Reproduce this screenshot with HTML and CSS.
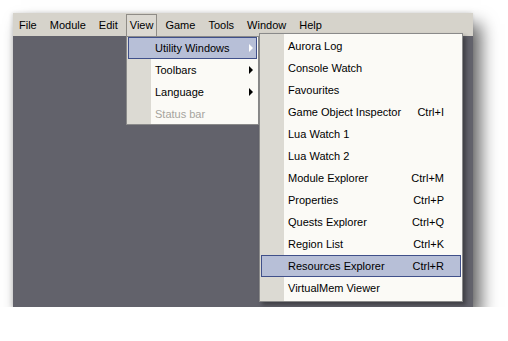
FILE: index.html
```html
<!DOCTYPE html>
<html lang="en">

<head>
    <meta charset="UTF-8">
    <title>View menu</title>
    <link rel="stylesheet" href="styles.css">
</head>

<body>
    <div class="window">
        <div class="menubar">
            <span class="top-item">File</span>
            <span class="top-item">Module</span>
            <span class="top-item">Edit</span>
            <span class="top-item open">View</span>
            <span class="top-item">Game</span>
            <span class="top-item">Tools</span>
            <span class="top-item">Window</span>
            <span class="top-item">Help</span>
        </div>
        <div class="workspace"></div>

        <div class="menu view-menu">
            <div class="item active"><span class="label">Utility Windows</span><span class="arrow"></span></div>
            <div class="item"><span class="label">Toolbars</span><span class="arrow"></span></div>
            <div class="item"><span class="label">Language</span><span class="arrow"></span></div>
            <div class="item disabled"><span class="label">Status bar</span></div>
        </div>

        <div class="menu utility-menu">
            <div class="item"><span class="label">Aurora Log</span></div>
            <div class="item"><span class="label">Console Watch</span></div>
            <div class="item"><span class="label">Favourites</span></div>
            <div class="item"><span class="label">Game Object Inspector</span><span class="key">Ctrl+I</span></div>
            <div class="item"><span class="label">Lua Watch 1</span></div>
            <div class="item"><span class="label">Lua Watch 2</span></div>
            <div class="item"><span class="label">Module Explorer</span><span class="key">Ctrl+M</span></div>
            <div class="item"><span class="label">Properties</span><span class="key">Ctrl+P</span></div>
            <div class="item"><span class="label">Quests Explorer</span><span class="key">Ctrl+Q</span></div>
            <div class="item"><span class="label">Region List</span><span class="key">Ctrl+K</span></div>
            <div class="item active"><span class="label">Resources Explorer</span><span class="key">Ctrl+R</span></div>
            <div class="item"><span class="label">VirtualMem Viewer</span></div>
        </div>
    </div>
</body>

</html>
```

FILE: styles.css
```css
* {
    margin: 0px;
    box-sizing: border-box;
}

body {
    background: #ffffff;
    font-family: "Liberation Sans", Arial, sans-serif;
    font-size: 11px;
    color: #000000;
    padding: 13px 0 0 13px;
}

.window {
    position: relative;
    width: 460px;
    height: 294px;
    display: flex;
    flex-direction: column;
    box-shadow: 8px 11px 16px rgba(0, 0, 0, 0.6), -1px 0 4px rgba(0, 0, 0, 0.15);
}

.menubar {
    height: 23px;
    background: #d6d3cb;
    display: flex;
    align-items: stretch;
}

.top-item {
    display: flex;
    align-items: center;
    padding: 0 5px 1px 6px;
    border: 1px solid transparent;
    border-bottom: none;
    margin-top: 1px;
}

.top-item:first-child {
    padding-left: 5px;
}

.top-item.open {
    border-color: #8f8c86;
    background: #dcd9d2;
    padding: 0 3px 1px 3px;
    margin-left: 2px;
    margin-right: 1px;
}

.workspace {
    flex: 1;
    background: #62626b;
}

.menu {
    position: absolute;
    background: #fbfaf6;
    border: 1px solid #8a8a8a;
    padding: 1px;
    background-image: linear-gradient(to right, #dcdad3 24px, transparent 24px);
    background-repeat: no-repeat;
    background-origin: padding-box;
}

.view-menu {
    left: 113px;
    top: 23px;
    width: 133px;
    height: 89px;
    padding: 0 1px 1px 1px;
}

.utility-menu {
    left: 246px;
    top: 20px;
    width: 204px;
    height: 269px;
    padding-top: 1px;
    box-shadow: 3px 3px 4px rgba(0, 0, 0, 0.35);
}

.item {
    height: 22px;
    display: flex;
    align-items: center;
    padding: 0 16px 0 26px;
    border: 1px solid transparent;
}

.item.active {
    background: #b7bfd7;
    border-color: #40508a;
}

.label {
    flex: 1;
}

.disabled {
    color: #a6a49e;
}

.arrow {
    width: 0;
    height: 0;
    border-top: 4px solid transparent;
    border-bottom: 4px solid transparent;
    border-left: 4px solid #000000;
    margin-right: -13px;
}

.item.active .arrow {
    border-left-color: #ffffff;
}
```
